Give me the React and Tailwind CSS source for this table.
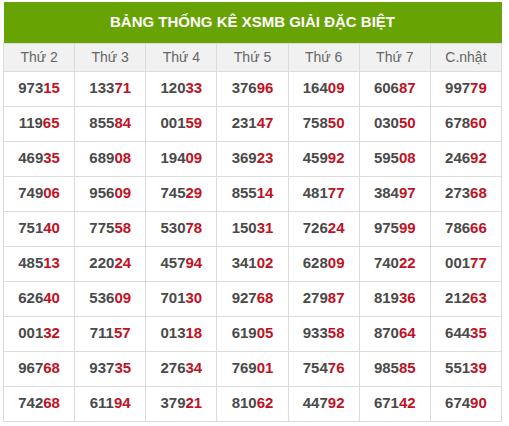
const days = ["Thứ 2", "Thứ 3", "Thứ 4", "Thứ 5", "Thứ 6", "Thứ 7", "C.nhật"];

const rows = [
  ["97315", "13371", "12033", "37696", "16409", "60687", "99779"],
  ["11965", "85584", "00159", "23147", "75850", "03050", "67860"],
  ["46935", "68908", "19409", "36923", "45992", "59508", "24692"],
  ["74906", "95609", "74529", "85514", "48177", "38497", "27368"],
  ["75140", "77558", "53078", "15031", "72624", "97599", "78666"],
  ["48513", "22024", "45794", "34102", "62809", "74022", "00177"],
  ["62640", "53609", "70130", "92768", "27987", "81936", "21263"],
  ["00132", "71157", "01318", "61905", "93358", "87064", "64435"],
  ["96768", "93735", "27634", "76901", "75476", "98585", "55139"],
  ["74268", "61194", "37921", "81062", "44792", "67142", "67490"],
];

function Num({ value }) {
  return (
    <span>
      {value.slice(0, 3)}
      <span className="text-[#c1121f]">{value.slice(3)}</span>
    </span>
  );
}

export default function App() {
  return (
    <div className="bg-white w-[509px] h-[426px] pt-[2px] pl-[3px]" style={{ fontFamily: '"Liberation Sans", Arial, sans-serif' }}>
      <table className="w-[499px] border-collapse table-fixed">
        <thead>
          <tr>
            <th colSpan={7} className="bg-[#68a304] h-[41px] text-white font-bold text-[15px] text-center">
              BẢNG THỐNG KÊ XSMB GIẢI ĐẶC BIỆT
            </th>
          </tr>
          <tr className="bg-[#f1f1f1]">
            {days.map((d) => (
              <th key={d} className="h-[28px] border border-[#dcdcdc] font-normal text-[14px] text-[#666]">
                {d}
              </th>
            ))}
          </tr>
        </thead>
        <tbody>
          {rows.map((r, i) => (
            <tr key={i}>
              {r.map((v, j) => (
                <td key={j} className="h-[35px] border border-[#dcdcdc] text-center font-bold text-[15px] text-[#4a4a4a]">
                  <Num value={v} />
                </td>
              ))}
            </tr>
          ))}
        </tbody>
      </table>
    </div>
  );
}
